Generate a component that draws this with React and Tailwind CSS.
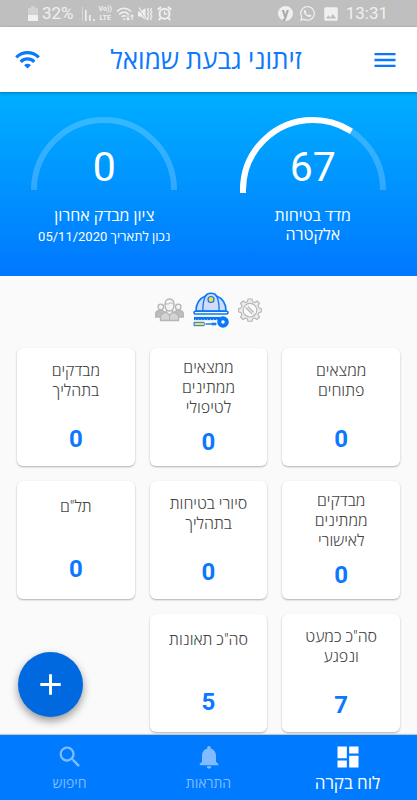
import { MdAdd, MdDashboard, MdImage, MdMenu, MdNotifications, MdSearch, MdWifi } from 'react-icons/md';
import { FaWhatsapp } from 'react-icons/fa';

const CARDS = [
  { title: 'ממצאים פתוחים', value: 0 },
  { title: 'ממצאים ממתינים לטיפולי', value: 0 },
  { title: 'מבדקים בתהליך', value: 0 },
  { title: 'מבדקים ממתינים לאישורי', value: 0 },
  { title: 'סיורי בטיחות בתהליך', value: 0 },
  { title: 'תל"ם', value: 0 },
  { title: 'סה"כ כמעט ונפגע', value: 7 },
  { title: 'סה"כ תאונות', value: 5 },
];

const TABS = [
  { label: 'לוח בקרה', icon: MdDashboard, active: true },
  { label: 'התראות', icon: MdNotifications },
  { label: 'חיפוש', icon: MdSearch },
];

function StatusBar() {
  return (
    <div dir="ltr" className="flex h-[27px] shrink-0 items-center justify-between bg-[#bfbfbf] pl-7 pr-[29px] text-[17px] text-[#f0f0f0]">
      <div className="flex items-center gap-1">
        <svg width="10" height="15" viewBox="0 0 10 15" fill="currentColor">
          <path d="M3 0h4v2h3v8H0V2h3z" opacity="0.4" />
          <path d="M0 9h10v6H0z" />
        </svg>
        <span>32%</span>
        <svg className="ml-1" width="13" height="14" viewBox="0 0 13 14" fill="currentColor">
          <path d="M0 0h1v14H0z" opacity="0.5" />
          <path d="M3 3h1.600v11H3zM7 8h1.600v6H7zM11 12h1.600v2H11z" />
        </svg>
        <span className="flex flex-col items-center text-[7px] leading-[9px] font-bold">
          <span>Vo))</span>
          <span>LTE</span>
        </span>
        <svg width="18" height="14" viewBox="0 0 18 14" fill="none" stroke="currentColor" strokeWidth="1.600">
          <path d="M.8 4.500Q8 -2 15.200 4.500M3.200 7.300Q8 3 12.800 7.300M5.600 9.800Q8 7.800 10 9.500" />
          <path d="M6.500 11.500h3L8 13.500z" fill="currentColor" stroke="none" />
          <path d="M12 8v5m-1.500-1.500L12 13l1.500-1.500M16 13V8m-1.500 1.500L16 8l1.500 1.500" strokeWidth="1.100" />
        </svg>
        <svg width="15" height="14" viewBox="0 0 15 14" fill="none" stroke="currentColor" strokeWidth="1.400">
          <path d="M0 4.500h3L7.500 1v12L3 9.500H0z" fill="currentColor" stroke="none" />
          <path d="M0 .5l9 13" stroke="#bfbfbf" />
          <path d="M1 .5l8 12M10.500 1l-1 2 1.500 2-1.500 2 1.500 2-1.500 2 1 2M13.500 1l-1 2 1.500 2-1.500 2 1.500 2-1.500 2 1 2" strokeWidth="1.200" />
        </svg>
        <svg width="15" height="15" viewBox="0 0 15 15" fill="none" stroke="currentColor" strokeWidth="2">
          <circle cx="7.500" cy="7.800" r="5" />
          <path d="M.7 3.800L4 1M14.300 3.800L11 1M3.500 12L1.800 14M11.500 12l1.700 2" />
          <path d="M7.500 4.800v3.200h2.700" strokeWidth="1.300" />
        </svg>
      </div>
      <div className="flex items-center gap-[6px]">
        <span className="flex size-[15px] items-center justify-center rounded-full bg-[#f0f0f0] pb-0.5 text-sm leading-none font-bold text-[#a8a8a8]">y</span>
        <FaWhatsapp size={17} />
        <MdImage size={18} />
        <span>13:31</span>
      </div>
    </div>
  );
}

function Gauge({ value, children }) {
  // half circle of radius 70, filled clockwise from the left
  const length = Math.PI * 70;
  const arc = 'M6 76A70 70 0 0 1 146 76';
  return (
    <div className="flex flex-col items-center">
      <div className="relative">
        <svg width="152" height="80" viewBox="0 0 152 80" fill="none" strokeWidth="6">
          <path d={arc} stroke="#fff" strokeOpacity="0.2" />
          {value > 0 && (
            <path d={arc} stroke="#fff" strokeLinecap="square" strokeDasharray={`${(length * value) / 100} ${length * 2}`} />
          )}
        </svg>
        <div className="absolute inset-x-0 top-8 text-center text-[41px] leading-[42px]">{value}</div>
      </div>
      <div className="mt-3 text-center text-base leading-[19px]">{children}</div>
    </div>
  );
}

function PeopleIcon() {
  return (
    <svg width="29" height="24" viewBox="0 0 29 24" fill="#f4f4f4" stroke="#b5b5b5" strokeWidth="1.300">
      <path d="M.7 19v-3.500q0-2.500 4.800-3.500 4 1 4.500 3v4zM28.300 19v-3.500q0-2.500-4.800-3.500-4 1-4.500 3v4z" fill="#bdbdbd" />
      <circle cx="5.800" cy="9" r="2.800" />
      <circle cx="23.200" cy="9" r="2.800" />
      <path d="M5.500 22.500v-4q0-3 6-4.500h6q6 1.500 6 4.500v4z" fill="#d4d4d4" />
      <path d="M11.500 12v2.500l3 2.500 3-2.500V12" />
      <path d="M10 6.500Q10 1 14.500 1T19 6.500Q19 13 14.500 13T10 6.500z" />
      <path d="M10 6q4.500.5 6-1.500 1 1.500 3 1.500M14.500 17v5" fill="none" strokeWidth="1" />
    </svg>
  );
}

function HelmetIcon() {
  return (
    <svg width="36" height="36" viewBox="0 0 36 36" fill="none" stroke="#0a78f5" strokeWidth="1.600">
      <path d="M3 19C3 10 7.500 6 12.500 4Q14 1.200 18 1.200T23.500 4C28.500 6 33 10 33 19z" fill="#cfdcfb" strokeLinejoin="round" />
      <path d="M12.500 4Q9.500 10 10 19M23.500 4Q26.500 10 26 19" strokeWidth="1.300" />
      <circle cx="18" cy="7.500" r="3" fill="#ffd83d" strokeWidth="1.200" />
      <rect x="1" y="19.200" width="34" height="2.800" rx="1.400" fill="#fff" />
      <path d="M1 26.500h26" strokeWidth="3.200" />
      <path d="M2 27.500h22" stroke="#7fb7ff" strokeWidth="1" strokeDasharray="1 2" />
      <circle cx="30" cy="30" r="3.800" fill="#fff" strokeWidth="4" />
      <path d="M13 32h6" strokeWidth="1.400" />
      <path d="M19 31.200h4v1.600h-4z" fill="#0a78f5" strokeWidth="1" />
      <path d="M1 30.300h10l1.200 1.700-1.200 1.700H1z" fill="#ffd83d" strokeWidth="1" />
    </svg>
  );
}

function GearIcon() {
  return (
    <svg width="24" height="24" viewBox="0 0 24 24" fill="#ececec" stroke="#b5b5b5" strokeWidth="1.100" strokeLinejoin="round">
      <path d="M10 1h4l.6 2.700 2 .8L19 3l2.500 2.500-1.500 2.400.8 1.900 2.500.7v3.500l-2.500.7-.8 2 1.500 2.300L19 21.500l-2.400-1.500-2 .8L14 23.300h-4l-.6-2.500-2-.8L5 21.500 2.500 19 4 16.700l-.8-2L.7 14v-3.500l2.500-.7.8-1.900-1.500-2.400L5 3l2.400 1.500 2-.8z" />
      <circle cx="12" cy="12.200" r="6.800" fill="#fafafa" />
      <path d="M9.200 9.400l5.600 5.600" strokeWidth="3.600" strokeLinecap="round" />
      <path d="M9.200 9.400l5.600 5.600" stroke="#dedede" strokeWidth="1.600" strokeLinecap="round" />
      <path d="M7 8.500l2 .5.500-2M14.500 17l.5-2 2-.3" stroke="#fafafa" strokeWidth="1.200" fill="none" />
    </svg>
  );
}

function Card({ title, value }) {
  return (
    <article className="grid h-[118px] grid-rows-[1fr_auto_4fr_auto_1fr] rounded-md bg-white px-3 py-[7px] text-center shadow-[0_1px_2px_rgba(0,0,0,0.3)]">
      <h2 className="row-start-2 text-base leading-5 font-light text-[#444]">{title}</h2>
      <p className="row-start-4 text-2xl leading-7 font-bold text-[#0a78ff]">{value}</p>
    </article>
  );
}

export default function App() {
  return (
    <div dir="rtl" className="relative flex min-h-screen flex-col bg-[#fafafa] font-[Roboto,'Open_Sans','Liberation_Sans',sans-serif]">
      <StatusBar />

      <header className="z-10 flex h-[65px] shrink-0 items-center justify-between bg-white px-[14px] text-[#0a78ff] shadow-[0_1px_3px_rgba(0,0,0,0.3)]">
        <button type="button" aria-label="תפריט" className="pr-1">
          <MdMenu size={28} />
        </button>
        <h1 className="text-[26px] leading-8">זיתוני גבעת שמואל</h1>
        <MdWifi size={27} />
      </header>

      <section className="grid h-[184px] shrink-0 grid-cols-2 bg-linear-to-b from-[#00aeff] to-[#0077ff] pt-[22px] text-white">
        <Gauge value={67}>
          <p>מדד בטיחות</p>
          <p>אלקטרה</p>
        </Gauge>
        <Gauge value={0}>
          <p>ציון מבדק אחרון</p>
          <p className="mt-0.5 text-[13px]">נכון לתאריך 05/11/2020</p>
        </Gauge>
      </section>

      <main className="flex-1 pb-[3px]">
        <div className="flex h-[72px] items-center justify-center gap-[9px] pb-1">
          <button type="button" aria-label="ציוד"><GearIcon /></button>
          <button type="button" aria-label="בטיחות"><HelmetIcon /></button>
          <button type="button" aria-label="עובדים"><PeopleIcon /></button>
        </div>
        <div className="grid grid-cols-3 gap-[15px] px-[17px]">
          {CARDS.map((card) => (
            <Card key={card.title} {...card} />
          ))}
        </div>
      </main>

      <button
        type="button"
        aria-label="הוספה"
        className="absolute bottom-[83px] left-[18px] flex size-[65px] items-center justify-center rounded-full bg-[#0069e0] text-white shadow-[0_4px_8px_rgba(0,0,0,0.4)]"
      >
        <MdAdd size={35} />
      </button>

      <nav className="grid h-[65px] shrink-0 grid-cols-3 bg-[#007aff] shadow-[0_-1px_1px_rgba(0,0,0,0.2)]">
        {TABS.map(({ label, icon: Icon, active }) => (
          <a
            key={label}
            href="#"
            className={`flex flex-col items-center pt-2 ${active ? 'text-[17px] text-white' : 'text-sm text-[#80bcff]'}`}
          >
            <Icon size={28} />
            <span className="leading-6">{label}</span>
          </a>
        ))}
      </nav>
    </div>
  );
}
